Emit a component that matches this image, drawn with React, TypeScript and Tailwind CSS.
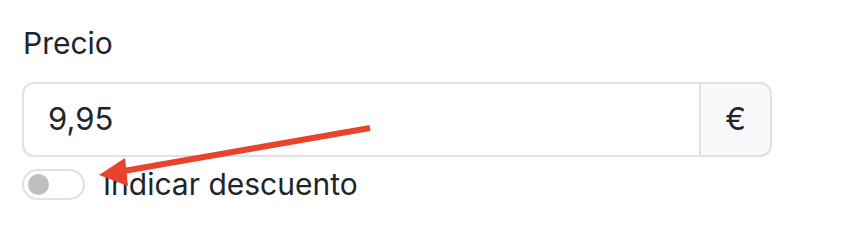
export default function App() {
  return (
    <div
      className="relative w-[862px] h-[240px] bg-white text-[#212529] pl-[22px] pt-[21px]"
      style={{ fontFamily: 'Inter, "Liberation Sans", sans-serif' }}
    >
      <label className="block text-[30px] leading-[45px] mb-[16px] pl-[1px]">Precio</label>

      <div className="flex w-[750px] h-[75px]">
        <div className="flex-1 flex items-center border-2 border-[#dee2e6] rounded-l-[12px] px-[24px] text-[31px]">
          9,95
        </div>
        <div className="w-[71px] flex items-center justify-center border-2 border-l-0 border-[#dee2e6] bg-[#f8f9fa] rounded-r-[12px] text-[31px]">
          €
        </div>
      </div>

      <div className="flex items-center mt-[9px] gap-[18px]">
        <div className="w-[63px] h-[31px] border-2 border-[#dee2e6] rounded-full flex items-center px-[4px]">
          <div className="w-[21px] h-[21px] rounded-full bg-[#bfbfbf]" />
        </div>
        <span className="text-[30px] leading-[36px]">Indicar descuento</span>
      </div>

      {/* annotation arrow */}
      <svg className="absolute left-0 top-0 pointer-events-none" width="862" height="240">
        <line x1="370" y1="128" x2="118" y2="172" stroke="#e8432c" strokeWidth="6" />
        <polygon points="99,175 125,158 128,186" fill="#e8432c" />
      </svg>
    </div>
  );
}
